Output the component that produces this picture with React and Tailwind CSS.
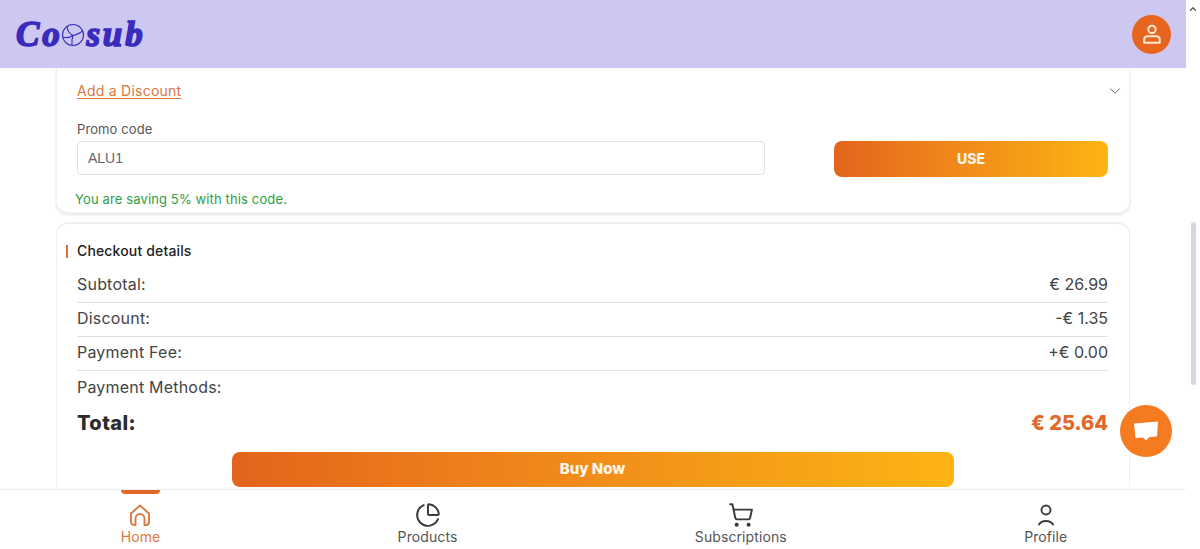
import { ChevronDown, ChevronUp, ChartPie, ShoppingCart } from 'lucide-react'

const font = "[font-family:Inter,'Noto_Sans',sans-serif]"

const rows = [
  { label: 'Subtotal:', value: '€ 26.99' },
  { label: 'Discount:', value: '-€ 1.35' },
  { label: 'Payment Fee:', value: '+€ 0.00' },
]

function Logo() {
  return (
    <div className="flex items-center text-[#3a2bbd] [font-family:'Liberation_Serif',serif] font-bold italic text-[35px] leading-none tracking-[2.800px] [-webkit-text-stroke:1.6px_#3a2bbd]">
      <span>Co</span>
      <svg width="24" height="24" viewBox="0 0 24 24" fill="none" stroke="#3a2bbd" strokeWidth="1.1" className="-ml-[1px] mr-[1px] mt-[1px]">
        <circle cx="12" cy="12" r="10.500" />
        <path d="M6 3.500C6.500 8 9 11 12 12.500M12 12.500c4-.5 7-2.500 10-5M12 12.500c-1 3-1.500 6-1 9.500M2 14c4 1.500 7 .5 10-1.500" />
      </svg>
      <span>sub</span>
    </div>
  )
}

function HomeIcon() {
  return (
    <svg width="24" height="24" viewBox="0 0 24 24" fill="none" stroke="#d97a42" strokeWidth="1.9" strokeLinejoin="round" strokeLinecap="round">
      <path d="M3 10.500 12 2.500l9 8V19a3 3 0 0 1-3 3h-1.500v-6.500a4.500 4.500 0 0 0-9 0V22H6a3 3 0 0 1-3-3z" />
    </svg>
  )
}

function ProfileIcon() {
  return (
    <svg width="24" height="24" viewBox="0 0 24 24" fill="none" stroke="#3a3a3a" strokeWidth="1.9" strokeLinecap="round">
      <circle cx="12" cy="7" r="4.500" />
      <path d="M5 21.500c1.500-2.500 4-3.500 7-3.500s5.500 1 7 3.500" />
    </svg>
  )
}

function NavItem({ icon, label, active }) {
  return (
    <div className="flex flex-col items-center">
      <div className={`h-1 w-full rounded-b ${active ? 'bg-[#e2682a]' : ''}`} />
      <div className="mt-[9px] h-6 flex items-center justify-center">{icon}</div>
      <span className={`text-sm leading-[20px] tracking-[0.1px] ${active ? 'text-[#d97a42]' : 'text-[#555]'}`}>{label}</span>
    </div>
  )
}

export default function App() {
  return (
    <div className={`flex h-[549px] overflow-hidden bg-white relative ${font}`}>
      <div className="flex flex-col w-[1186px]">
        <header className="h-[68px] shrink-0 bg-[#cdc8f1] flex items-center justify-between pl-4 pr-[15px]">
          <Logo />
          <div className="w-[39px] h-[39px] rounded-full bg-[#e8651f] flex items-center justify-center">
            <svg width="22" height="22" viewBox="0 0 24 24" fill="none" stroke="#ffe9d8" strokeWidth="2.200" strokeLinecap="round">
              <circle cx="12" cy="7" r="4" />
              <path d="M7 14.500h10a3.500 3.500 0 0 1 3.500 3.500v3.500h-17V18A3.500 3.500 0 0 1 7 14.500z" strokeLinejoin="round" />
            </svg>
          </div>
        </header>

        <main className="flex-1 overflow-hidden px-14 flex flex-col gap-2 min-h-0">
          <section className="shrink-0 h-[146px] w-[1074px] rounded-b-xl border-x border-b-2 border-[#f0f0f0] pl-[20px] pr-[8px] shadow-sm">
            <div className="flex items-center justify-between h-[46px]">
              <span className="text-sm tracking-[0.25px] text-[#d9773f] underline underline-offset-2">Add a Discount</span>
              <ChevronDown size={18} strokeWidth={1.3} className="text-[#666] -mr-[3px]" />
            </div>
            <div className="text-[13px] leading-[18px] tracking-[0.1px] text-[#555] mt-[6px]">Promo code</div>
            <div className="flex items-start justify-between pr-[13px] mt-[3px]">
              <div className="w-[688px] h-[34px] rounded border border-[#e2e2e2] flex items-center pl-[10px] text-sm text-[#666] [font-family:'Liberation_Sans',sans-serif]">ALU1</div>
              <button className="w-[274px] h-9 rounded-lg bg-gradient-to-r from-[#e3641c] to-[#fdb414] text-[#fff5e8] text-sm font-extrabold">USE</button>
            </div>
            <div className="text-[13px] leading-[18px] tracking-[0.13px] text-[#2f9e44] mt-[13px] -ml-[2px]">You are saving 5% with this code.</div>
          </section>

          <section className="shrink-0 w-[1074px] rounded-t-xl border-x border-t-2 border-[#f0f0f0] pl-[20px] pr-[21px] pt-[17px]">
            <div className="flex items-center h-5 -ml-[11px]">
              <div className="w-[2px] h-[13px] bg-[#d9703a] mr-[9px]" />
              <span className="text-sm font-medium tracking-[0.15px] text-[#222]">Checkout details</span>
            </div>
            <div className="mt-[8px]">
              {rows.map((row) => (
                <div key={row.label} className="flex items-center justify-between h-[34px] pb-[4px] border-b border-[#e0e0e0] text-base text-[#444]">
                  <span className="tracking-[0.2px]">{row.label}</span>
                  <span>{row.value}</span>
                </div>
              ))}
              <div className="flex items-center h-[33px] pb-[2px] text-base tracking-[0.2px] text-[#444]">Payment Methods:</div>
            </div>
            <div className="flex items-center justify-between h-[38px] text-xl font-extrabold">
              <span className="text-[#2b2b2b] tracking-[0.4px]">Total:</span>
              <span className="text-[#e2682a]">€ 25.64</span>
            </div>
            <div className="flex justify-center mt-[10px]">
              <button className="w-[722px] h-[35px] rounded-lg bg-gradient-to-r from-[#e3641c] to-[#fdb414] text-[#fff5e8] text-[15px] font-extrabold">Buy Now</button>
            </div>
          </section>
        </main>

        <nav className="h-[60px] shrink-0 border-t border-[#eeeeee] bg-white flex justify-around items-start pl-[2px]">
          <NavItem active icon={<HomeIcon />} label="Home" />
          <NavItem icon={<ChartPie size={26} strokeWidth={1.8} className="text-[#3a3a3a]" />} label="Products" />
          <NavItem icon={<ShoppingCart size={26} strokeWidth={1.8} className="text-[#3a3a3a]" />} label="Subscriptions" />
          <NavItem icon={<ProfileIcon />} label="Profile" />
        </nav>
      </div>

      <div className="w-[14px] flex flex-col items-center">
        <ChevronUp size={10} strokeWidth={3} className="text-[#555] mt-1" />
        <div className="w-[5px] h-[163px] rounded-full bg-[#d3d8e0] mt-[208px]" />
      </div>

      <button className="absolute left-[1120px] top-[405px] w-[52px] h-[52px] rounded-full bg-[#f47b20] flex items-center justify-center">
        <svg width="26" height="24" viewBox="0 0 26 24" fill="#fff">
          <path d="M1 4.500 25 2.500l-1 15-7.500.5L13 21.500 10 18.500l-7.500.5z" />
        </svg>
      </button>
    </div>
  )
}
